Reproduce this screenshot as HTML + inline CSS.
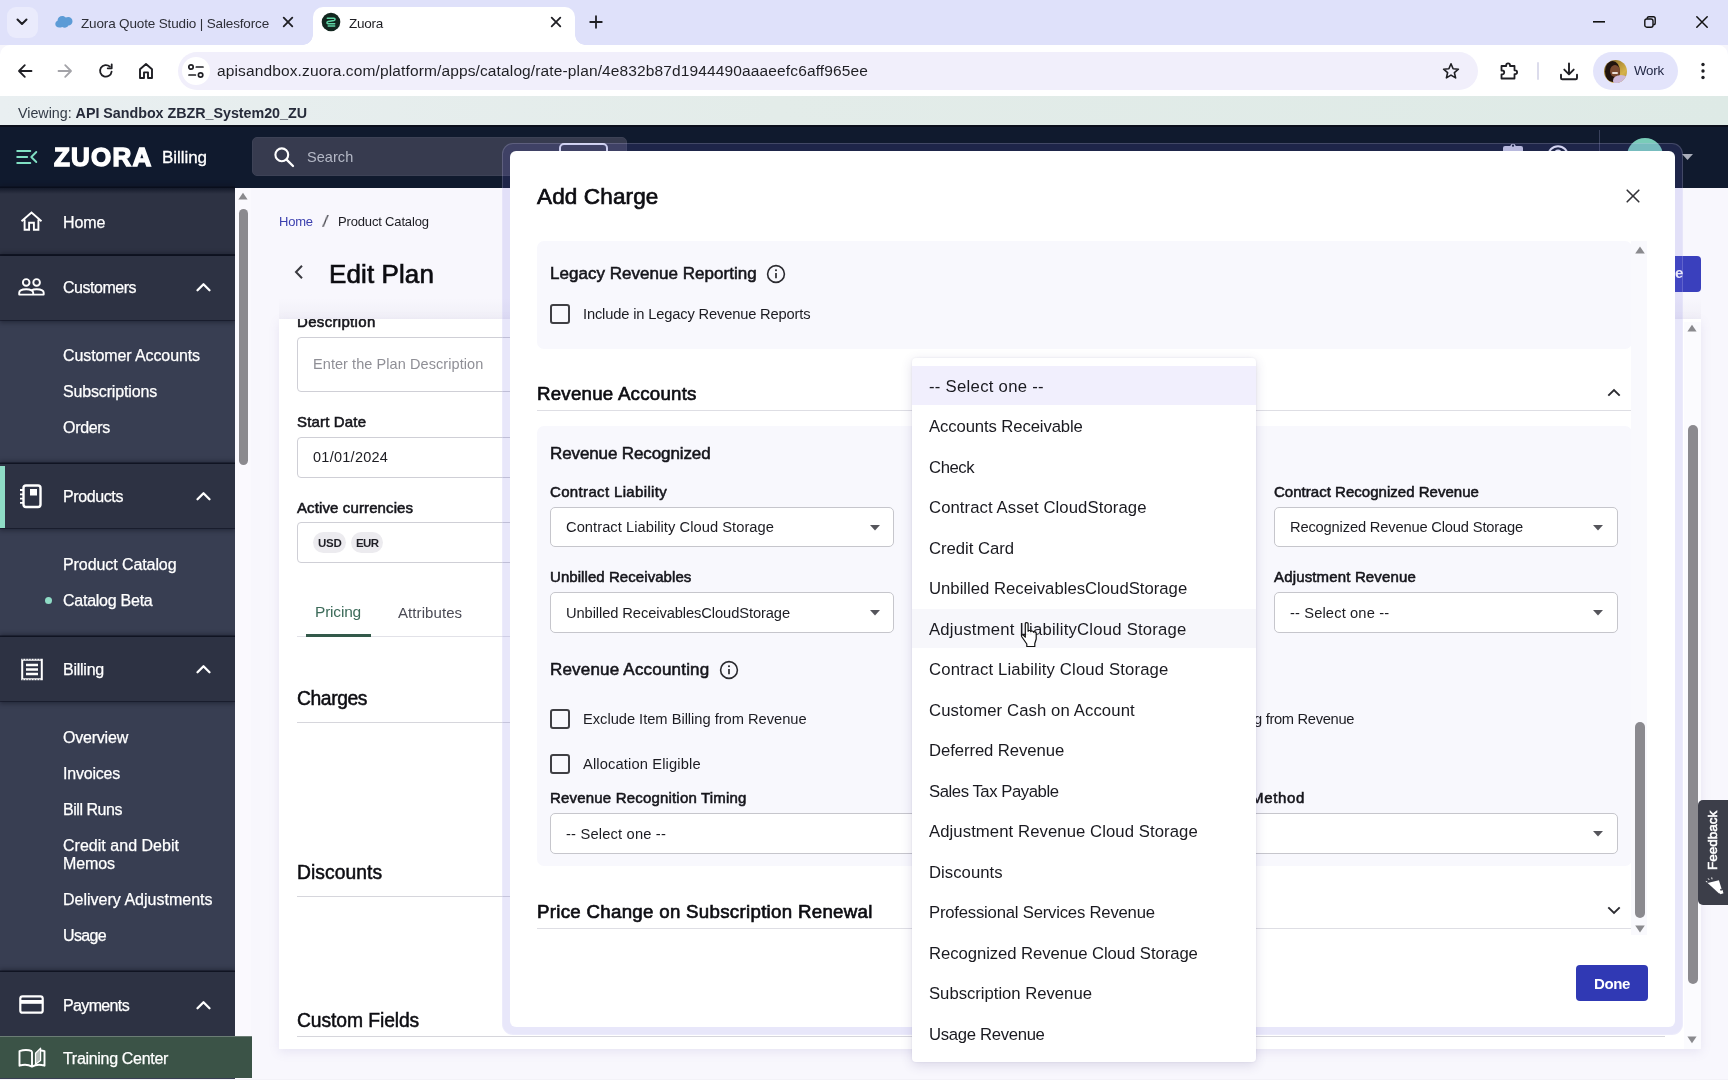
<!DOCTYPE html>
<html lang="en">
<head>
<meta charset="utf-8">
<title>Zuora</title>
<style>
*{box-sizing:border-box;margin:0;padding:0}
html,body{width:1728px;height:1080px;overflow:hidden;background:#f7f6fc;font-family:"Liberation Sans",sans-serif;color:#111}
.abs{position:absolute}
.t{position:absolute;white-space:nowrap;line-height:1;transform-origin:0 50%;will-change:transform}
svg{position:absolute;overflow:visible}
/* ---------- browser chrome ---------- */
#tabstrip{left:0;top:0;width:1728px;height:45px;background:#dfe1fa}
#tabsearch{left:7px;top:7px;width:31px;height:31px;border-radius:9px;background:#eaebfc}
#tab2{left:313px;top:7px;width:262px;height:38px;background:#fff;border-radius:10px 10px 0 0}
#tab2:before,#tab2:after{content:"";position:absolute;bottom:0;width:10px;height:10px}
#tab2:before{left:-10px;background:radial-gradient(circle at 0 0,rgba(255,255,255,0) 9.5px,#fff 10px)}
#tab2:after{right:-10px;background:radial-gradient(circle at 100% 0,rgba(255,255,255,0) 9.5px,#fff 10px)}
#toolbar{left:0;top:45px;width:1728px;height:51px;background:#fff;border-radius:10px 10px 0 0}
#urlpill{left:178px;top:52px;width:1300px;height:38px;border-radius:19px;background:#f1effb}
#siteinfo{left:182px;top:57px;width:28px;height:28px;border-radius:14px;background:#fff}
#profile{left:1593px;top:52px;width:85px;height:38px;border-radius:19px;background:#e3e4fb}
#viewbar{left:0;top:96px;width:1728px;height:29px;background:linear-gradient(90deg,#e9eff1 0%,#e3ece9 45%,#deeae6 100%)}
/* ---------- app header ---------- */
#apphead{left:0;top:125px;width:1728px;height:63px;background:#101a2e}
#search{left:252px;top:136.500px;width:375px;height:39.500px;border-radius:5px;background:#373b4f;border:1px solid #3d4256}
#kbd{left:559px;top:143px;width:49px;height:25px;border-radius:5px;border:2px solid #dfe2f3}
.lab{font-size:15px;color:#15151b;-webkit-text-stroke:0.550px #15151b;margin-top:0.600px}
.inp{border:1px solid #cfcfd6;border-radius:4px;background:#fff}
.chip{border-radius:11px;background:#ecebef}
.chipt{font-size:11.500px;font-weight:bold;color:#1f1f26}
.sec{font-size:19.300px;color:#0d0d12;-webkit-text-stroke:0.500px #0d0d12;margin-top:0.800px}
.gbox{background:#f8f8fd;border-radius:7px}
.h17{font-size:17px;color:#15151b;-webkit-text-stroke:0.550px #15151b;margin-top:0.500px}
.h20{font-size:18.700px;color:#0d0d12;-webkit-text-stroke:0.650px #0d0d12;margin-top:1.100px}
.f15{font-size:14.700px;color:#1c1c22;margin-top:0.500px}
.cb{width:20px;height:20px;border:2px solid #3f3f44;border-radius:3px;background:transparent}
.sel{border:1px solid #c6c6cc;border-radius:5px;background:#fff}
.ddi{font-size:16.700px;color:#1a1a20;margin-top:1.700px}
/* ---------- sidebar ---------- */
#side{left:0;top:188px;width:235px;height:892px;background:#383e52;overflow:hidden}
.sh{position:absolute;left:0;width:235px;height:64px;background:#2d3243;box-shadow:0 -1.500px 0 rgba(8,12,26,.75),0 -3px 4px rgba(15,18,30,.4),0 1px 0 rgba(8,12,26,.45),0 3px 4px rgba(15,18,30,.4)}
.st{color:#fff;font-size:16px;margin-top:1px;-webkit-text-stroke:0.250px #fff}
#train{left:0;top:1036px;width:252px;height:42px;background:#3b5347;border-top:1px solid #6b7d75}
</style>
</head>
<body>
<!-- ================= BROWSER CHROME ================= -->
<div class="abs" id="tabstrip"></div>
<div class="abs" id="tabsearch"></div>
<div class="abs" id="tab2"></div>
<div class="abs" id="toolbar"></div>
<div class="abs" id="urlpill"></div>
<div class="abs" id="siteinfo"></div>
<div class="abs" id="profile"></div>
<div class="abs" id="viewbar"></div>
<!-- tab strip -->
<svg style="left:15px;top:17px" width="14" height="10" viewBox="0 0 14 10"><path d="M2.5 2.5 L7 7 L11.5 2.5" fill="none" stroke="#1f1f24" stroke-width="2" stroke-linecap="round" stroke-linejoin="round"/></svg>
<svg style="left:55px;top:15px" width="18" height="14" viewBox="0 0 18 14"><path d="M4.2 12.6c-2.2 0-3.9-1.6-3.9-3.6 0-1.500 0.900-2.700 2.200-3.300 0.100-2.600 2.200-4.600 4.800-4.600 1.400 0 2.600 0.600 3.500 1.500 0.700-0.500 1.500-0.700 2.400-0.700 2.400 0 4.300 1.900 4.300 4.300 0 2.300-1.800 4.200-4.100 4.300-0.700 1.300-2.100 2.200-3.700 2.200-0.900 0-1.700-0.300-2.400-0.700-0.800 0.400-1.900 0.600-3.100 0.600z" fill="#5c9bd6"/></svg>
<span class="t" id="c1" style="left:81px;top:16.800px;font-size:13.500px;color:#2e2f38">Zuora Quote Studio | Salesforce</span>
<svg style="left:282px;top:16px" width="12" height="12" viewBox="0 0 12 12"><path d="M1.700 1.700 L10.300 10.300 M10.300 1.700 L1.700 10.300" stroke="#1f1f24" stroke-width="1.800" stroke-linecap="round"/></svg>
<svg style="left:321px;top:12px" width="20" height="20" viewBox="0 0 20 20"><circle cx="10" cy="10" r="9.300" fill="#12261f"/><path d="M6.300 6.300 H13 C14.400 6.300 14.400 8.200 13 8.500 L7 9.600 C5.600 9.900 5.600 11.800 7 11.800 H13.700 M6.300 6.300 M13.700 13.900 H7.200" fill="none" stroke="#5fd6a6" stroke-width="1.500" stroke-linecap="round" stroke-linejoin="round"/></svg>
<span class="t" id="c2" style="left:349px;top:16.800px;font-size:13.500px;color:#1f1f24">Zuora</span>
<svg style="left:550px;top:16px" width="12" height="12" viewBox="0 0 12 12"><path d="M1.700 1.700 L10.300 10.300 M10.300 1.700 L1.700 10.300" stroke="#1f1f24" stroke-width="1.800" stroke-linecap="round"/></svg>
<svg style="left:589px;top:15px" width="14" height="14" viewBox="0 0 14 14"><path d="M7 1.200 V12.800 M1.200 7 H12.800" stroke="#1f1f24" stroke-width="1.800" stroke-linecap="round"/></svg>
<!-- window controls -->
<svg style="left:1593px;top:21px" width="12" height="2" viewBox="0 0 12 2"><rect width="12" height="1.600" fill="#111"/></svg>
<svg style="left:1644px;top:16px" width="12" height="12" viewBox="0 0 12 12"><rect x="0.800" y="3" width="8.200" height="8.200" rx="2" fill="none" stroke="#111" stroke-width="1.400"/><path d="M3.200 2.800 V2.600 Q3.200 0.800 5 0.800 H9.400 Q11.200 0.800 11.200 2.600 V7 Q11.200 8.800 9.400 8.800 H9.200" fill="none" stroke="#111" stroke-width="1.400"/></svg>
<svg style="left:1696px;top:16px" width="12" height="12" viewBox="0 0 12 12"><path d="M0.800 0.800 L11.200 11.200 M11.200 0.800 L0.800 11.200" stroke="#111" stroke-width="1.500" stroke-linecap="round"/></svg>
<!-- toolbar -->
<svg style="left:17px;top:63px" width="16" height="16" viewBox="0 0 16 16"><path d="M14.500 8 H2.200 M7.800 2.200 L2 8 L7.800 13.800" fill="none" stroke="#1f1f24" stroke-width="1.800" stroke-linecap="round" stroke-linejoin="round"/></svg>
<svg style="left:57px;top:63px" width="16" height="16" viewBox="0 0 16 16"><path d="M1.500 8 H13.800 M8.200 2.200 L14 8 L8.200 13.800" fill="none" stroke="#a3a3a8" stroke-width="1.800" stroke-linecap="round" stroke-linejoin="round"/></svg>
<svg style="left:98px;top:63px" width="16" height="16" viewBox="0 0 16 16"><path d="M13.600 8.600 A5.800 5.800 0 1 1 11.900 3.700" fill="none" stroke="#1f1f24" stroke-width="1.800" stroke-linecap="round"/><path d="M13.700 1.300 V5.300 H9.700" fill="none" stroke="#1f1f24" stroke-width="1.800" stroke-linecap="round" stroke-linejoin="round"/></svg>
<svg style="left:138px;top:62px" width="16" height="18" viewBox="0 0 16 18"><path d="M2 16 V7.200 L8 2 L14 7.200 V16 H10 V10.400 H6 V16 Z" fill="none" stroke="#1f1f24" stroke-width="1.900" stroke-linejoin="round"/></svg>
<svg style="left:187px;top:63px" width="18" height="16" viewBox="0 0 18 16"><circle cx="4" cy="4" r="2.200" fill="none" stroke="#1f1f24" stroke-width="1.700"/><path d="M9.300 4 H16" stroke="#1f1f24" stroke-width="1.700" stroke-linecap="round"/><circle cx="13.600" cy="12" r="2.200" fill="none" stroke="#1f1f24" stroke-width="1.700"/><path d="M2 12 H8.400" stroke="#1f1f24" stroke-width="1.700" stroke-linecap="round"/></svg>
<span class="t" id="c3" style="left:217px;top:63.100px;font-size:15.500px;color:#1f1f24">apisandbox.zuora.com/platform/apps/catalog/rate-plan/4e832b87d1944490aaaeefc6aff965ee</span>
<svg style="left:1442px;top:62px" width="18" height="18" viewBox="0 0 18 18"><path d="M9 1.800 L11.100 6.700 L16.400 7.200 L12.400 10.700 L13.600 15.900 L9 13.100 L4.400 15.900 L5.600 10.700 L1.600 7.200 L6.900 6.700 Z" fill="none" stroke="#1f1f24" stroke-width="1.600" stroke-linejoin="round"/></svg>
<svg style="left:1499px;top:61px" width="20" height="20" viewBox="0 0 20 20"><path d="M2.500 5 H7.200 V4.200 A1.900 1.900 0 0 1 11 4.200 V5 H15.500 V9.300 H16.200 A1.900 1.900 0 0 1 16.200 13.100 H15.500 V17.500 H2.500 V13.300 H3.300 A1.900 1.900 0 0 0 3.300 9.500 H2.500 Z" fill="none" stroke="#1f1f24" stroke-width="1.800" stroke-linejoin="round"/></svg>
<div class="abs" style="left:1537px;top:62px;width:2px;height:18px;background:#dcdcec;border-radius:1px"></div>
<svg style="left:1559px;top:62px" width="20" height="20" viewBox="0 0 20 20"><path d="M10 1.500 V12 M5.300 7.600 L10 12.300 L14.700 7.600" fill="none" stroke="#1f1f24" stroke-width="1.900" stroke-linecap="round" stroke-linejoin="round"/><path d="M2 12.800 V16 Q2 17.300 3.300 17.300 H16.700 Q18 17.300 18 16 V12.800" fill="none" stroke="#1f1f24" stroke-width="1.900" stroke-linecap="round"/></svg>
<div class="abs" style="left:1604px;top:59.500px;width:23px;height:23px;border-radius:50%;background:linear-gradient(135deg,#6b5326 0%,#b8963a 45%,#d6b24a 70%,#a88a3c 100%);overflow:hidden"><div class="abs" style="left:1px;top:1px;width:15px;height:21px;border-radius:50%;background:#21140e"></div><div class="abs" style="left:6px;top:5px;width:10px;height:12px;border-radius:50%;background:#7a4a31"></div><div class="abs" style="left:9px;top:15px;width:16px;height:11px;border-radius:50%;background:#cdb9da"></div><div class="abs" style="left:8px;top:12.500px;width:6px;height:2px;border-radius:1px;background:#e9ddd6"></div></div>
<span class="t" id="c4" style="left:1634px;top:64px;font-size:13.300px;color:#1d2340">Work</span>
<svg style="left:1701px;top:62px" width="4" height="18" viewBox="0 0 4 18"><circle cx="2" cy="2.500" r="1.700" fill="#1f1f24"/><circle cx="2" cy="9" r="1.700" fill="#1f1f24"/><circle cx="2" cy="15.500" r="1.700" fill="#1f1f24"/></svg>
<!-- viewing bar -->
<span class="t" id="c5" style="left:18px;top:105.900px;font-size:14.300px;color:#333b47">Viewing: <b style="color:#262b3a">API Sandbox ZBZR_System20_ZU</b></span>

<!-- ================= APP HEADER ================= -->
<div class="abs" id="apphead"></div>
<div class="abs" id="search"></div>
<div class="abs" id="kbd"></div>
<div class="abs" style="left:0;top:125px;width:1728px;height:2px;background:#0b0f1c"></div>
<svg style="left:16px;top:149px" width="22" height="16" viewBox="0 0 22 16"><path d="M1.200 2 H14.300 M1.200 8 H11.200 M1.200 14 H14.300" stroke="#80dfc3" stroke-width="1.900" stroke-linecap="round"/><path d="M20.300 3 L15.300 8 L20.300 13" fill="none" stroke="#80dfc3" stroke-width="1.900" stroke-linecap="round" stroke-linejoin="round"/></svg>
<span class="t" id="h1" style="left:54px;top:143.500px;font-size:26px;font-weight:bold;color:#fff;-webkit-text-stroke:1.400px #fff">ZUORA</span>
<span class="t" id="h2" style="left:162px;top:148.500px;font-size:17px;color:#fff;-webkit-text-stroke:0.300px #fff">Billing</span>
<svg style="left:273px;top:146px" width="22" height="22" viewBox="0 0 22 22"><circle cx="8.800" cy="8.800" r="6.400" fill="none" stroke="#fff" stroke-width="2.100"/><path d="M13.600 13.600 L20 20" stroke="#fff" stroke-width="2.300" stroke-linecap="round"/></svg>
<span class="t" id="h3" style="left:307px;top:149.500px;font-size:14.500px;color:#b4b8c6">Search</span>
<svg style="left:1503px;top:142px" width="20" height="24" viewBox="0 0 20 24"><path d="M2 4 H7.200 A2.900 2.900 0 0 1 12.800 4 H18 Q20 4 20 6 V22 Q20 24 18 24 H2 Q0 24 0 22 V6 Q0 4 2 4 Z M10 2.600 A1.100 1.100 0 1 0 10 4.800 A1.100 1.100 0 1 0 10 2.600 Z" fill="#c6c9dd" fill-rule="evenodd"/></svg>
<svg style="left:1547px;top:145px" width="22" height="22" viewBox="0 0 22 22"><circle cx="11" cy="11" r="9.800" fill="none" stroke="#e8eaf5" stroke-width="2"/><path d="M7.800 8.600 A3.200 3.200 0 1 1 11 11.800 V13.500" fill="none" stroke="#e8eaf5" stroke-width="2"/></svg>
<div class="abs" style="left:1599px;top:130px;width:1px;height:54px;background:#39415c"></div>
<div class="abs" style="left:1627px;top:138px;width:36px;height:36px;border-radius:50%;background:#79ccb8"></div>
<svg style="left:1682px;top:154px" width="11" height="6" viewBox="0 0 11 6"><path d="M0 0 H11 L5.500 6 Z" fill="#a9adba"/></svg>

<!-- ================= MAIN PAGE ================= -->
<div class="abs" style="left:235px;top:188px;width:1493px;height:892px;background:#f8f7fd"></div>
<!-- main scrollbar -->
<div class="abs" style="left:235px;top:188px;width:16px;height:892px;background:#faf9fe"></div>
<svg style="left:238px;top:192px" width="10" height="8" viewBox="0 0 10 8"><path d="M5 0.800 L9.600 7.600 H0.400 Z" fill="#8a8a8e"/></svg>
<div class="abs" style="left:239px;top:208.500px;width:9px;height:256.500px;border-radius:5px;background:#8b8a8f"></div>
<!-- breadcrumb & title -->
<span class="t" id="m1" style="left:279px;top:215px;font-size:13px;color:#3b3fae">Home</span>
<span class="t" style="left:322.500px;top:212.500px;font-size:17px;color:#3a3a40;transform:skewX(-8deg)">/</span>
<span class="t" id="m2" style="left:338px;top:215px;font-size:13px;color:#1c1c22">Product Catalog</span>
<svg style="left:294px;top:264px" width="10" height="16" viewBox="0 0 10 16"><path d="M8 1.800 L2 8 L8 14.200" fill="none" stroke="#3a3a40" stroke-width="2" stroke-linecap="butt" stroke-linejoin="miter"/></svg>
<span class="t" id="m3" style="left:328.500px;top:260.500px;font-size:26px;color:#0d0d12;-webkit-text-stroke:0.650px #0d0d12">Edit Plan</span>
<!-- blue button peeking right of modal -->
<div class="abs" style="left:1600px;top:256px;width:101px;height:36px;border-radius:4px;background:#3a40bd"></div>
<span class="t" style="left:1675px;top:265px;font-size:15px;font-weight:bold;color:#fff">e</span>
<div class="abs" style="left:279px;top:298px;width:1422px;height:20.500px;background:linear-gradient(to bottom,rgba(120,115,150,0),rgba(120,115,150,.06))"></div>
<!-- card -->
<div class="abs" id="card" style="left:279px;top:318.500px;width:1422px;height:730.500px;background:#fff;box-shadow:0 3px 10px rgba(120,110,180,.13);overflow:hidden">
 <span class="t lab" id="m4" style="left:18px;top:-5.5px">Description</span>
 <div class="abs inp" style="left:18px;top:18.5px;width:1368px;height:55px"></div>
 <span class="t" id="m5" style="left:34px;top:38px;font-size:14.500px;color:#8f8f96">Enter the Plan Description</span>
 <span class="t lab" id="m6" style="left:18px;top:95px">Start Date</span>
 <div class="abs inp" style="left:18px;top:118.5px;width:1368px;height:41px"></div>
 <span class="t" id="m7" style="left:34px;top:131.5px;font-size:14.500px;color:#1c1c22">01/01/2024</span>
 <span class="t lab" id="m8" style="left:18px;top:181px">Active currencies</span>
 <div class="abs inp" style="left:18px;top:203.5px;width:1368px;height:41px"></div>
 <div class="abs chip" style="left:34px;top:213.5px;width:33px;height:21px"></div>
 <span class="t chipt" id="m9" style="left:38.500px;top:219px">USD</span>
 <div class="abs chip" style="left:72px;top:213.5px;width:32px;height:21px"></div>
 <span class="t chipt" id="m10" style="left:76.500px;top:219px">EUR</span>
 <span class="t" id="m11" style="left:36px;top:285.5px;font-size:15.500px;color:#3d6b5a">Pricing</span>
 <span class="t" id="m12" style="left:118.500px;top:286.5px;font-size:15px;color:#4b4b55">Attributes</span>
 <div class="abs" style="left:18px;top:317px;width:1368px;height:1px;background:#e2e2e8"></div>
 <div class="abs" style="left:27px;top:315.5px;width:65px;height:2.500px;background:#33594a"></div>
 <span class="t sec" id="m13" style="left:18px;top:369.5px">Charges</span>
 <div class="abs" style="left:18px;top:403.300px;width:1368px;height:1px;background:#d6d6dc"></div>
 <span class="t sec" id="m14" style="left:18px;top:543.5px">Discounts</span>
 <div class="abs" style="left:18px;top:577px;width:1368px;height:1px;background:#d6d6dc"></div>
 <span class="t sec" id="m15" style="left:18px;top:691.5px">Custom Fields</span>
 <div class="abs" style="left:18px;top:717.5px;width:1368px;height:1px;background:#d6d6dc"></div>
 <!-- card scrollbar -->
 <div class="abs" style="left:1405px;top:3.500px;width:17px;height:727px;background:#fbfbfe"></div>
 <svg style="left:1408px;top:5.500px" width="10" height="8" viewBox="0 0 10 8"><path d="M5 0.800 L9.600 7.600 H0.400 Z" fill="#8a8a8e"/></svg>
 <div class="abs" style="left:1409px;top:106.500px;width:9.500px;height:559px;border-radius:5px;background:#8b8a8f"></div>
 <svg style="left:1408px;top:717.500px" width="10" height="8" viewBox="0 0 10 8"><path d="M5 7.200 L9.600 0.400 H0.400 Z" fill="#8a8a8e"/></svg>
</div>
<!-- feedback tab -->
<div class="abs" style="left:1698px;top:800px;width:34px;height:105px;border-radius:5px 0 0 5px;background:#3c3e49"></div>
<span class="t" id="m16" style="left:1706px;top:869.500px;font-size:13.500px;color:#fff;transform:rotate(-90deg);transform-origin:0 0;-webkit-text-stroke:0.550px #fff">Feedback</span>
<svg style="left:1704.500px;top:877px" width="21" height="21" viewBox="0 0 20 20"><path d="M2.500 5.800 L13.200 3.200 L16.800 14.600 L13.400 15.600 Z" fill="#fff"/><path d="M13 13.400 L16.600 12.300 L17.600 15.500 L14.600 16.500 Z" fill="#fff"/><circle cx="15.300" cy="12.200" r="0.900" fill="#3c3e49"/><path d="M0.800 4.200 L2.300 4.800 M3 1.300 L4 2.800 M6.400 0.400 L6.700 2.200" stroke="#fff" stroke-width="0.900"/></svg>

<!-- ================= SIDEBAR ================= -->
<div class="abs" style="left:0;top:0;width:235px;height:1080px;overflow:hidden"><div class="abs" id="side"></div>
<div class="sh" style="top:188px;height:66px"></div>
<span class="t st" id="s1" style="left:63px;top:213.5px">Home</span>
<div class="sh" style="top:256px;height:64px"></div>
<span class="t st" id="s2" style="left:63px;top:278.5px">Customers</span>
<svg style="left:196px;top:282px" width="15" height="10" viewBox="0 0 15 10"><path d="M1.500 8.300 L7.500 2.300 L13.500 8.300" fill="none" stroke="#fff" stroke-width="2.300" stroke-linecap="round" stroke-linejoin="round"/></svg>
<div class="sh" style="top:464px;height:64px"></div>
<span class="t st" id="s3" style="left:63px;top:487.5px">Products</span>
<svg style="left:196px;top:491px" width="15" height="10" viewBox="0 0 15 10"><path d="M1.500 8.300 L7.500 2.300 L13.500 8.300" fill="none" stroke="#fff" stroke-width="2.300" stroke-linecap="round" stroke-linejoin="round"/></svg>
<div class="sh" style="top:637px;height:64px"></div>
<span class="t st" id="s4" style="left:63px;top:660.5px">Billing</span>
<svg style="left:196px;top:664px" width="15" height="10" viewBox="0 0 15 10"><path d="M1.500 8.300 L7.500 2.300 L13.500 8.300" fill="none" stroke="#fff" stroke-width="2.300" stroke-linecap="round" stroke-linejoin="round"/></svg>
<div class="sh" style="top:972px;height:64px"></div>
<span class="t st" id="s5" style="left:63px;top:996.5px">Payments</span>
<svg style="left:196px;top:1000px" width="15" height="10" viewBox="0 0 15 10"><path d="M1.500 8.300 L7.500 2.300 L13.500 8.300" fill="none" stroke="#fff" stroke-width="2.300" stroke-linecap="round" stroke-linejoin="round"/></svg>
<div class="abs" style="left:0;top:466px;width:4.500px;height:62px;background:#8fdcc6"></div>
<div class="abs" style="left:0;top:188px;width:235px;height:6px;background:linear-gradient(to bottom,rgba(12,18,34,.75),rgba(12,18,34,0))"></div>
<span class="t st" id="s6" style="left:63px;top:346.5px">Customer Accounts</span>
<span class="t st" id="s7" style="left:63px;top:382.5px">Subscriptions</span>
<span class="t st" id="s8" style="left:63px;top:418.5px">Orders</span>
<span class="t st" id="s9" style="left:63px;top:555.5px">Product Catalog</span>
<span class="t st" id="s10" style="left:63px;top:591.5px">Catalog Beta</span>
<span class="t st" id="s11" style="left:63px;top:728.5px">Overview</span>
<span class="t st" id="s12" style="left:63px;top:764.5px">Invoices</span>
<span class="t st" id="s13" style="left:63px;top:800.5px">Bill Runs</span>
<span class="t st" id="s14" style="left:63px;top:836.5px">Credit and Debit</span>
<span class="t st" id="s15" style="left:63px;top:854.5px">Memos</span>
<span class="t st" id="s16" style="left:63px;top:890.5px">Delivery Adjustments</span>
<span class="t st" id="s17" style="left:63px;top:926.5px">Usage</span>
<div class="abs" style="left:44.500px;top:596.500px;width:7px;height:7px;border-radius:50%;background:#8fdcc6"></div>
<svg style="left:20px;top:211px" width="23" height="20" viewBox="0 0 23 20"><path d="M1.500 10.300 L11.500 1.500 L21.500 10.300 M4.600 8.500 V18.800 H9.100 V11.800 H13.900 V18.800 H18.400 V8.500" fill="none" stroke="#fff" stroke-width="1.900" stroke-linejoin="miter"/></svg>
<svg style="left:18px;top:278px" width="27" height="18" viewBox="0 0 27 18"><circle cx="8.200" cy="4.400" r="3.300" fill="none" stroke="#fff" stroke-width="1.900"/><circle cx="18.600" cy="4.400" r="3.300" fill="none" stroke="#fff" stroke-width="1.900"/><path d="M1.200 16.600 V14.800 C1.200 12.400 4.500 11.200 8.200 11.200 C10.300 11.200 12.200 11.600 13.500 12.400 C14.700 11.600 16.500 11.200 18.600 11.200 C22.300 11.200 25.700 12.400 25.700 14.800 V16.600 Z M13.500 12.400 C14.600 13.000 15.200 13.800 15.200 14.800 V16.600" fill="none" stroke="#fff" stroke-width="1.900" stroke-linejoin="round"/></svg>
<svg style="left:19px;top:484px" width="24" height="25" viewBox="0 0 24 25"><rect x="4.500" y="1.500" width="17" height="21.500" rx="2.500" fill="none" stroke="#fff" stroke-width="2.400"/><rect x="11" y="5" width="7" height="6.500" fill="#fff"/><path d="M1 6 H5 M1 10.300 H5 M1 14.600 H5 M1 18.900 H5" stroke="#fff" stroke-width="1.800"/></svg>
<svg style="left:21px;top:658px" width="22" height="23" viewBox="0 0 22 23"><path d="M1.200 1.800 H20.800 V21.200 H1.200 Z" fill="none" stroke="#fff" stroke-width="2" stroke-dasharray="0"/><path d="M1.200 1 H20.800 M1.200 22 H20.800" stroke="#2e3344" stroke-width="1.200" stroke-dasharray="1.400 1.400"/><path d="M5 7 H17 M5 11.500 H17 M5 16 H17" stroke="#fff" stroke-width="2.400"/></svg>
<svg style="left:19px;top:995px" width="25" height="19" viewBox="0 0 25 19"><rect x="1.300" y="1.300" width="22.400" height="16.400" rx="2.300" fill="none" stroke="#fff" stroke-width="2.200"/><rect x="1.300" y="5" width="22.400" height="3.800" fill="#fff"/></svg>
</div>
<div class="abs" id="train"></div>
<div class="abs" style="left:0;top:1078.600px;width:1728px;height:1.400px;background:#f3f2f8"></div>
<svg style="left:18px;top:1047px" width="28" height="22" viewBox="0 0 28 22"><path d="M14 4.200 V19.600 M14 4.200 C10.500 2.800 5.500 2.800 1.500 4.200 V18.700 C5.500 17.400 10.500 17.600 14 19.600 C17.500 17.600 22.500 17.400 26.500 18.700 V4.200 C25.300 3.800 24 3.600 22.800 3.500" fill="none" stroke="#fff" stroke-width="1.900" stroke-linejoin="round"/><path d="M17.500 6.200 L22.600 1.200 V13.500 L17.500 17.300 Z" fill="rgba(255,255,255,.62)" stroke="#fff" stroke-width="1.200" stroke-linejoin="round"/></svg>
<span class="t st" id="s18" style="left:63px;top:1049.500px">Training Center</span>
<!-- ================= MODAL ================= -->
<div class="abs" id="ring" style="left:502px;top:143px;width:1181px;height:892px;border-radius:11px;background:rgba(110,100,225,.155);border:1px solid rgba(255,255,255,.16)"></div>
<div class="abs" id="modal" style="left:510px;top:151px;width:1165px;height:876px;border-radius:6px;background:#fff">
 <span class="t" id="d1" style="left:27px;top:35px;font-size:22.500px;color:#0d0d12;-webkit-text-stroke:0.700px #0d0d12">Add Charge</span>
 <svg style="left:1116px;top:38px" width="14" height="14" viewBox="0 0 14 14"><path d="M1.200 1.200 L12.800 12.800 M12.800 1.200 L1.200 12.800" stroke="#333338" stroke-width="1.600" stroke-linecap="round"/></svg>
 <!-- box 1 -->
 <div class="abs gbox" style="left:27px;top:90px;width:1095px;height:108px"></div>
 <span class="t h17" id="d2" style="left:40px;top:113.500px">Legacy Revenue Reporting</span>
 <svg class="info" style="left:256px;top:112.500px" width="20" height="20" viewBox="0 0 20 20"><circle cx="10" cy="10" r="8.400" fill="none" stroke="#2b2b30" stroke-width="1.600"/><path d="M10 9 V14.300" stroke="#2b2b30" stroke-width="1.700"/><circle cx="10" cy="6.200" r="1.050" fill="#2b2b30"/></svg>
 <div class="abs cb" style="left:40px;top:153px"></div>
 <span class="t f15" id="d3" style="left:72.500px;top:155.5px">Include in Legacy Revenue Reports</span>
 <!-- Revenue Accounts heading -->
 <span class="t h20" id="d4" style="left:27px;top:233px">Revenue Accounts</span>
 <svg style="left:1097px;top:237px" width="14" height="9" viewBox="0 0 14 9"><path d="M1.300 7.700 L7 2 L12.700 7.700" fill="none" stroke="#2b2b30" stroke-width="1.900"/></svg>
 <div class="abs" style="left:27px;top:259px;width:1095px;height:1px;background:#dedee4"></div>
 <!-- box 2 -->
 <div class="abs gbox" style="left:27px;top:275px;width:1095px;height:440px"></div>
 <span class="t h17" id="d5" style="left:40px;top:293.500px">Revenue Recognized</span>
 <span class="t lab" id="d6" style="left:40px;top:332.500px">Contract Liability</span>
 <div class="abs sel" style="left:40px;top:356px;width:344px;height:40px"></div>
 <span class="t f15" id="d7" style="left:56px;top:368.500px">Contract Liability Cloud Storage</span>
 <svg class="car" style="left:359.500px;top:373.500px" width="10" height="6" viewBox="0 0 10 6"><path d="M0 0 H10 L5 5.600 Z" fill="#55555b"/></svg>
 <span class="t lab" id="d8" style="left:40px;top:417px">Unbilled Receivables</span>
 <div class="abs sel" style="left:40px;top:441px;width:344px;height:40.500px"></div>
 <span class="t f15" id="d9" style="left:56px;top:454.900px">Unbilled ReceivablesCloudStorage</span>
 <svg class="car" style="left:359.500px;top:459px" width="10" height="6" viewBox="0 0 10 6"><path d="M0 0 H10 L5 5.600 Z" fill="#55555b"/></svg>
 <!-- middle column (mostly hidden by dropdown) -->
 <div class="abs sel" style="left:402px;top:356px;width:344px;height:40px"></div>
 <div class="abs sel" style="left:402px;top:441px;width:344px;height:40.500px;border-color:#4b52c4"></div>
 <!-- right column -->
 <span class="t lab" id="d10" style="left:764px;top:332.500px">Contract Recognized Revenue</span>
 <div class="abs sel" style="left:764px;top:356px;width:344px;height:40px"></div>
 <span class="t f15" id="d11" style="left:780px;top:368.500px">Recognized Revenue Cloud Storage</span>
 <svg class="car" style="left:1083px;top:373.500px" width="10" height="6" viewBox="0 0 10 6"><path d="M0 0 H10 L5 5.600 Z" fill="#55555b"/></svg>
 <span class="t lab" id="d12" style="left:764px;top:417px">Adjustment Revenue</span>
 <div class="abs sel" style="left:764px;top:441px;width:344px;height:40.500px"></div>
 <span class="t f15" id="d13" style="left:780px;top:454.900px">-- Select one --</span>
 <svg class="car" style="left:1083px;top:459px" width="10" height="6" viewBox="0 0 10 6"><path d="M0 0 H10 L5 5.600 Z" fill="#55555b"/></svg>
 <!-- revenue accounting -->
 <span class="t h17" id="d14" style="left:40px;top:509.500px">Revenue Accounting</span>
 <svg class="info" style="left:208.500px;top:508.500px" width="20" height="20" viewBox="0 0 20 20"><circle cx="10" cy="10" r="8.400" fill="none" stroke="#2b2b30" stroke-width="1.600"/><path d="M10 9 V14.300" stroke="#2b2b30" stroke-width="1.700"/><circle cx="10" cy="6.200" r="1.050" fill="#2b2b30"/></svg>
 <div class="abs cb" style="left:40px;top:558px"></div>
 <span class="t f15" id="d15" style="left:72.500px;top:560.5px">Exclude Item Billing from Revenue</span>
 <span class="t f15" id="d16" style="left:743.500px;top:560.5px">g from Revenue</span>
 <div class="abs cb" style="left:40px;top:603px"></div>
 <span class="t f15" id="d17" style="left:72.500px;top:605.5px">Allocation Eligible</span>
 <span class="t lab" id="d18" style="left:40px;top:638px">Revenue Recognition Timing</span>
 <span class="t lab" id="d19" style="left:741px;top:638px">Method</span>
 <div class="abs sel" style="left:40px;top:662px;width:525px;height:40.500px"></div>
 <span class="t f15" id="d20" style="left:56px;top:675.500px">-- Select one --</span>
 <div class="abs sel" style="left:583px;top:662px;width:525px;height:40.500px"></div>
 <svg class="car" style="left:1083px;top:680px" width="10" height="6" viewBox="0 0 10 6"><path d="M0 0 H10 L5 5.600 Z" fill="#55555b"/></svg>
 <!-- price change -->
 <span class="t h20" id="d21" style="left:27px;top:750.700px">Price Change on Subscription Renewal</span>
 <svg style="left:1097px;top:755px" width="14" height="9" viewBox="0 0 14 9"><path d="M1.300 1.300 L7 7 L12.700 1.300" fill="none" stroke="#2b2b30" stroke-width="1.900"/></svg>
 <div class="abs" style="left:27px;top:777px;width:1095px;height:1px;background:#dedee4"></div>
 <!-- modal scrollbar -->
 <div class="abs" style="left:1121px;top:90px;width:16px;height:694px;background:#f9f9fd"></div>
 <svg style="left:1124.500px;top:94.500px" width="10" height="8" viewBox="0 0 10 8"><path d="M5 0.600 L9.800 7.600 H0.200 Z" fill="#8a8a8e"/></svg>
 <div class="abs" style="left:1125px;top:570.500px;width:9.500px;height:196px;border-radius:5px;background:#8b8a8f"></div>
 <svg style="left:1124.500px;top:773.500px" width="10" height="8" viewBox="0 0 10 8"><path d="M5 7.400 L9.800 0.400 H0.200 Z" fill="#8a8a8e"/></svg>
 <!-- done -->
 <div class="abs" style="left:1066px;top:814px;width:72px;height:35.500px;border-radius:4px;background:#3039b4"></div>
 <span class="t" id="d22" style="left:1083.500px;top:824.500px;font-size:15px;font-weight:bold;color:#fff">Done</span>
</div>

<div class="abs" id="dd" style="left:911.500px;top:357.500px;width:344px;height:704.500px;background:#fff;border-radius:4px;box-shadow:0 3px 12px rgba(60,50,120,.16),0 0 3px rgba(60,50,120,.08)">
 <div class="abs" style="left:0;top:8.500px;width:344px;height:39.200px;background:#f1effd"></div>
 <span class="t ddi" id="o0" style="left:17px;top:19.75px">-- Select one --</span>
 <span class="t ddi" id="o1" style="left:17px;top:60.25px">Accounts Receivable</span>
 <span class="t ddi" id="o2" style="left:17px;top:100.75px">Check</span>
 <span class="t ddi" id="o3" style="left:17px;top:141.25px">Contract Asset CloudStorage</span>
 <span class="t ddi" id="o4" style="left:17px;top:181.75px">Credit Card</span>
 <span class="t ddi" id="o5" style="left:17px;top:222.25px">Unbilled ReceivablesCloudStorage</span>
 <div class="abs" style="left:0;top:251.500px;width:344px;height:38.800px;background:#f7f7fb"></div>
 <span class="t ddi" id="o6" style="left:17px;top:262.75px">Adjustment LiabilityCloud Storage</span>
 <span class="t ddi" id="o7" style="left:17px;top:303.25px">Contract Liability Cloud Storage</span>
 <span class="t ddi" id="o8" style="left:17px;top:343.75px">Customer Cash on Account</span>
 <span class="t ddi" id="o9" style="left:17px;top:384.25px">Deferred Revenue</span>
 <span class="t ddi" id="o10" style="left:17px;top:424.75px">Sales Tax Payable</span>
 <span class="t ddi" id="o11" style="left:17px;top:465.25px">Adjustment Revenue Cloud Storage</span>
 <span class="t ddi" id="o12" style="left:17px;top:505.75px">Discounts</span>
 <span class="t ddi" id="o13" style="left:17px;top:546.25px">Professional Services Revenue</span>
 <span class="t ddi" id="o14" style="left:17px;top:586.75px">Recognized Revenue Cloud Storage</span>
 <span class="t ddi" id="o15" style="left:17px;top:627.25px">Subscription Revenue</span>
 <span class="t ddi" id="o16" style="left:17px;top:667.75px">Usage Revenue</span>
</div>
<svg style="left:1020px;top:622px" width="20" height="26" viewBox="0 0 20 26"><path d="M5.300 1.600 C5.300 0.300 8.100 0.300 8.100 1.600 V9.300 C8.100 8.200 10.800 8.200 10.800 9.600 C10.800 8.600 13.500 8.800 13.500 10.200 C13.500 9.400 16.200 9.600 16.200 11 V17 L14.800 21.500 V24.500 H6.800 V22 L1.600 14.500 C0.900 13.300 2.500 12.200 3.600 13.300 L5.300 15.200 Z" fill="rgba(255,255,255,.92)" stroke="#111" stroke-width="1.200" stroke-linejoin="round"/></svg>
<style id="fit">
#c1{letter-spacing:-0.149px}
#c2{letter-spacing:-0.256px}
#c3{letter-spacing:0.129px}
#c4{letter-spacing:-0.199px}
#c5{letter-spacing:-0.021px}
#h1{letter-spacing:1.212px}
#h2{letter-spacing:-0.051px}
#h3{letter-spacing:0.058px}
#s1{letter-spacing:-0.097px}
#s2{letter-spacing:-0.484px}
#s3{letter-spacing:-0.393px}
#s4{letter-spacing:-0.241px}
#s5{letter-spacing:-0.643px}
#s6{letter-spacing:-0.102px}
#s7{letter-spacing:-0.157px}
#s8{letter-spacing:-0.318px}
#s9{letter-spacing:-0.082px}
#s10{letter-spacing:-0.251px}
#s11{letter-spacing:-0.211px}
#s12{letter-spacing:-0.213px}
#s13{letter-spacing:-0.460px}
#s14{letter-spacing:0.023px}
#s15{letter-spacing:-0.091px}
#s16{letter-spacing:0.005px}
#s17{letter-spacing:-0.650px}
#s18{letter-spacing:-0.312px}
#m1{letter-spacing:-0.197px}
#m2{letter-spacing:-0.162px}
#m3{letter-spacing:0.102px}
#m4{letter-spacing:0.324px}
#m5{letter-spacing:0.071px}
#m6{letter-spacing:0.167px}
#m7{letter-spacing:0.262px}
#m8{letter-spacing:0.117px}
#m9{letter-spacing:-0.260px}
#m10{letter-spacing:-0.560px}
#m11{letter-spacing:-0.199px}
#m12{letter-spacing:0.083px}
#m13{letter-spacing:-0.399px}
#m14{letter-spacing:0.059px}
#m15{letter-spacing:-0.080px}
#d1{letter-spacing:0.141px}
#d2{letter-spacing:0.028px}
#d3{letter-spacing:-0.161px}
#d4{letter-spacing:0.241px}
#d5{letter-spacing:-0.115px}
#d6{letter-spacing:0.345px}
#d7{letter-spacing:0.045px}
#d8{letter-spacing:0.066px}
#d9{letter-spacing:-0.093px}
#d10{letter-spacing:0.022px}
#d11{letter-spacing:-0.169px}
#d12{letter-spacing:0.153px}
#d13{letter-spacing:0.129px}
#d14{letter-spacing:0.191px}
#d15{letter-spacing:-0.027px}
#d16{letter-spacing:-0.307px}
#d17{letter-spacing:0.136px}
#d18{letter-spacing:0.185px}
#d19{letter-spacing:0.659px}
#d20{letter-spacing:0.179px}
#d21{letter-spacing:0.293px}
#d22{letter-spacing:-0.375px}
#o0{letter-spacing:0.284px}
#o1{letter-spacing:-0.108px}
#o2{letter-spacing:-0.422px}
#o3{letter-spacing:0.085px}
#o4{letter-spacing:-0.021px}
#o5{letter-spacing:0.010px}
#o6{letter-spacing:0.217px}
#o7{letter-spacing:0.150px}
#o8{letter-spacing:0.111px}
#o9{letter-spacing:-0.080px}
#o10{letter-spacing:-0.441px}
#o11{letter-spacing:0.080px}
#o12{letter-spacing:0.035px}
#o13{letter-spacing:-0.210px}
#o14{letter-spacing:-0.065px}
#o15{letter-spacing:-0.018px}
#o16{letter-spacing:-0.314px}
</style>
</body>
</html>
